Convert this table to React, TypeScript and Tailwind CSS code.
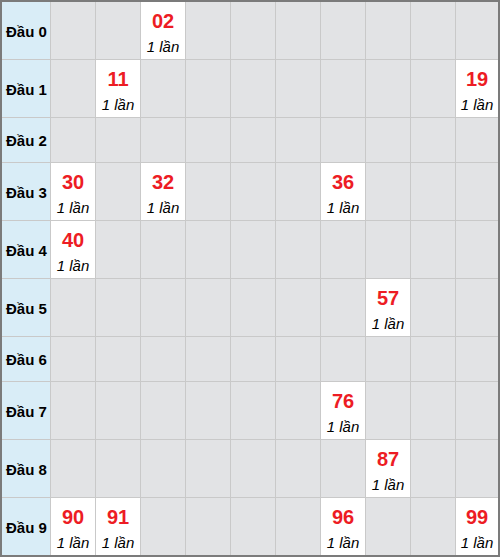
const hits: Record<number, number[]> = {
  0: [2],
  1: [1, 9],
  2: [],
  3: [0, 2, 6],
  4: [0],
  5: [7],
  6: [],
  7: [6],
  8: [7],
  9: [0, 1, 6, 9],
};

export default function App() {
  const rows = Array.from({ length: 10 }, (_, i) => i);
  const cols = Array.from({ length: 10 }, (_, i) => i);

  return (
    <div className="w-[500px] h-[557px] border-2 border-[#7b7b7b] bg-[#c9c9c9] font-['Liberation_Sans',Arial,sans-serif]">
      <div className="grid grid-cols-[48px_repeat(9,44px)_1fr] gap-px">
        {rows.map((r) => {
          const tall = hits[r].length > 0;
          return [
            <div
              key={`h${r}`}
              className={`bg-[#d9edf7] flex items-center pl-1 text-[15px] font-bold text-black ${
                tall ? "h-[57px] pt-[3px]" : "h-[44px] pt-[2px]"
              }`}
            >
              Đầu {r}
            </div>,
            ...cols.map((c) => {
              const hit = hits[r].includes(c);
              return (
                <div
                  key={`${r}-${c}`}
                  className={`flex flex-col items-center pt-[7px] ${
                    tall ? "h-[57px]" : "h-[44px]"
                  } ${hit ? "bg-white" : "bg-[#e2e3e5]"}`}
                >
                  {hit && (
                    <>
                      <span className="text-[20px] font-bold leading-[24px] text-[#ed1c24]">
                        {`${r}${c}`}
                      </span>
                      <span className="text-[15px] italic leading-[28px] text-black">
                        1 lần
                      </span>
                    </>
                  )}
                </div>
              );
            }),
          ];
        })}
      </div>
    </div>
  );
}
